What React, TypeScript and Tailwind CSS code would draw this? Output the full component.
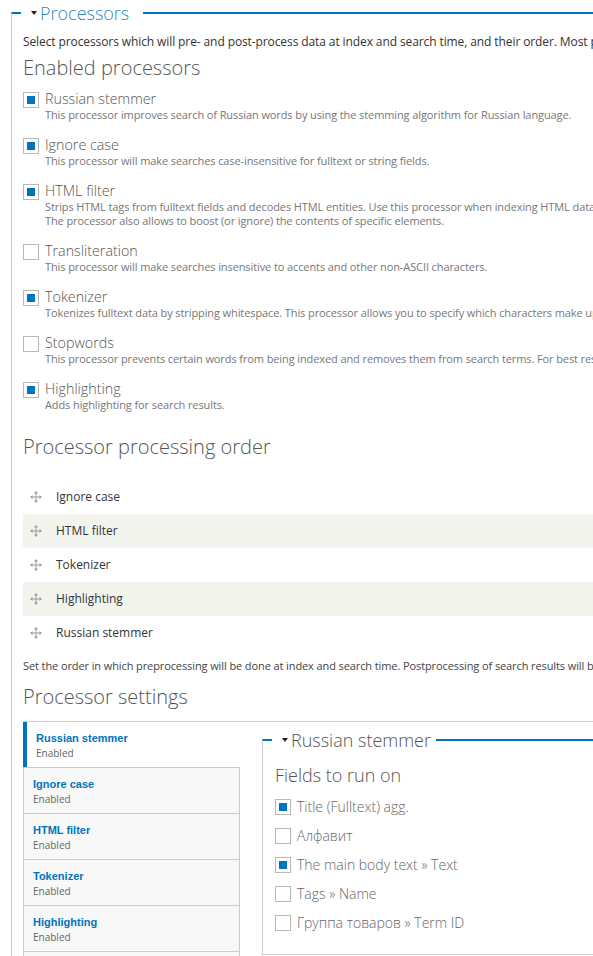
import React from 'react';

const processors = [
  { label: 'Russian stemmer', on: true, desc: ['This processor improves search of Russian words by using the stemming algorithm for Russian language.'] },
  { label: 'Ignore case', on: true, desc: ['This processor will make searches case-insensitive for fulltext or string fields.'] },
  {
    label: 'HTML filter',
    on: true,
    desc: [
      'Strips HTML tags from fulltext fields and decodes HTML entities. Use this processor when indexing HTML data, for example, node bodies for certain text formats.',
      'The processor also allows to boost (or ignore) the contents of specific elements.',
    ],
  },
  { label: 'Transliteration', on: false, desc: ['This processor will make searches insensitive to accents and other non-ASCII characters.'] },
  { label: 'Tokenizer', on: true, desc: ['Tokenizes fulltext data by stripping whitespace. This processor allows you to specify which characters make up words and which characters should be ignored.'] },
  { label: 'Stopwords', on: false, desc: ['This processor prevents certain words from being indexed and removes them from search terms. For best results, it should only be executed after tokenizing.'] },
  { label: 'Highlighting', on: true, desc: ['Adds highlighting for search results.'] },
];

const order = ['Ignore case', 'HTML filter', 'Tokenizer', 'Highlighting', 'Russian stemmer'];
const tabs = ['Ignore case', 'HTML filter', 'Tokenizer', 'Highlighting', 'Stopwords'];

const fields = [
  { label: 'Title (Fulltext) agg.', on: true },
  { label: 'Алфавит', on: false },
  { label: 'The main body text » Text', on: true },
  { label: 'Tags » Name', on: false },
  { label: 'Группа товаров » Term ID', on: false },
];

function Checkbox({ on }: { on: boolean }) {
  return (
    <span className="flex h-4 w-4 shrink-0 items-center justify-center border border-[#b8b8b8] bg-white">
      {on && <span className="h-2 w-2 bg-[#0074bd]" />}
    </span>
  );
}

function Caret() {
  return (
    <svg width="6" height="4" viewBox="0 0 6 4" className="shrink-0">
      <path d="M0 0 L6 0 L3 4 Z" fill="#222" />
    </svg>
  );
}

function DragHandle() {
  return (
    <svg width="12" height="12" viewBox="0 0 12 12" className="shrink-0">
      <g stroke="#9a9a9a" strokeWidth="1" fill="none">
        <path d="M6 1.5 V10.5 M1.5 6 H10.5" />
      </g>
      <g fill="#9a9a9a">
        <path d="M6 0 L8 2.5 H4 Z" />
        <path d="M6 12 L8 9.5 H4 Z" />
        <path d="M0 6 L2.5 4 V8 Z" />
        <path d="M12 6 L9.5 4 V8 Z" />
      </g>
    </svg>
  );
}

export default function App() {
  return (
    <div className="relative h-[956px] w-[593px] overflow-hidden bg-white font-['Open_Sans',sans-serif]">
      <div className="ml-[11px] w-[1100px]">
        {/* Processors legend */}
        <div className="flex h-[26px]">
          <div className="mt-[12px] w-[10px] border-l border-t-2 border-l-[#ccc] border-t-[#0074bd]" />
          <div className="ml-[10px] flex items-center gap-[3px]">
            <Caret />
            <span className="text-[18px] font-light leading-[26px] text-[#2a86c8]">Processors</span>
          </div>
          <div className="ml-[14px] mt-[12px] h-[2px] flex-1 bg-[#0074bd]" />
        </div>

        <div className="border-l border-[#ccc] pl-[11px] pt-[7px]">
          <p className="whitespace-nowrap text-[12px] leading-[18px] tracking-[-0.1px] text-[#333]">
            Select processors which will pre- and post-process data at index and search time, and their order. Most processors will only influence fulltext fields, but refer to their individual descriptions for details.
          </p>

          <h2 className="mt-[4px] text-[20px] font-light leading-[26px] text-[#555]">Enabled processors</h2>

          <div className="mt-[9px] flex flex-col gap-[14px]">
            {processors.map((p) => (
              <div key={p.label} className="flex gap-[6px]">
                <div className="mt-[2px]">
                  <Checkbox on={p.on} />
                </div>
                <div>
                  <div className="text-[14.3px] font-light leading-[18px] text-[#555]">{p.label}</div>
                  {p.desc.map((d) => (
                    <div key={d} className="whitespace-nowrap text-[11px] leading-[14px] tracking-[-0.1px] text-[#777]">
                      {d}
                    </div>
                  ))}
                </div>
              </div>
            ))}
          </div>

          <h2 className="mt-[22px] text-[20px] font-light leading-[26px] text-[#555]">Processor processing order</h2>

          <div className="mt-[20px]">
            {order.map((o, i) => (
              <div
                key={o}
                className={`flex h-[34px] items-center pl-[7px] ${i % 2 === 1 ? 'bg-[#f3f4ee]' : 'bg-white'}`}
              >
                <DragHandle />
                <span className="ml-[14px] text-[12px] text-[#333]">{o}</span>
              </div>
            ))}
          </div>

          <p className="mt-[9px] whitespace-nowrap text-[11px] leading-[14px] tracking-[-0.1px] text-[#444]">
            Set the order in which preprocessing will be done at index and search time. Postprocessing of search results will be in the exact opposite direction.
          </p>

          <h2 className="mt-[11px] text-[20px] font-light leading-[26px] text-[#555]">Processor settings</h2>

          {/* Vertical tabs */}
          <div className="mt-[11px] flex border-t border-[#ccc]">
            <div className="w-[217px] shrink-0">
              <div className="h-[45px] border-l-4 border-[#0074bd] bg-white pl-[9px] pt-[9px]">
                <div className="font-['Liberation_Sans',sans-serif] text-[11px] font-bold leading-[14px] text-[#0074bd]">
                  Russian stemmer
                </div>
                <div className="mt-[1px] text-[10px] leading-[14px] text-[#666]">Enabled</div>
              </div>
              {tabs.map((t) => (
                <div key={t} className="h-[46px] border-x border-t border-[#ccc] bg-[#f8f8f8] pl-[9px] pt-[9px]">
                  <div className="font-['Liberation_Sans',sans-serif] text-[11px] font-bold leading-[14px] text-[#0074bd]">
                    {t}
                  </div>
                  <div className="mt-[1px] text-[10px] leading-[14px] text-[#666]">Enabled</div>
                </div>
              ))}
            </div>

            <div className="flex-1 pl-[22px] pt-[5px]">
              <div className="flex h-[26px]">
                <div className="mt-[12px] w-[10px] border-l border-t-2 border-l-[#ccc] border-t-[#0074bd]" />
                <div className="ml-[10px] flex items-center gap-[3px]">
                  <Caret />
                  <span className="text-[18px] font-light leading-[26px] text-[#555]">Russian stemmer</span>
                </div>
                <div className="ml-[5px] mt-[12px] h-[2px] flex-1 bg-[#0074bd]" />
              </div>
              <div className="border-b border-l border-[#ccc] pb-[17px] pl-[12px] pt-[10px]">
                <h3 className="text-[18px] font-light leading-[24px] text-[#555]">Fields to run on</h3>
                <div className="mt-[5px]">
                  {fields.map((f) => (
                    <div key={f.label} className="flex h-[29px] items-center gap-[6px]">
                      <Checkbox on={f.on} />
                      <span className="whitespace-nowrap text-[14px] font-light text-[#666]">{f.label}</span>
                    </div>
                  ))}
                </div>
              </div>
            </div>
          </div>
        </div>
      </div>
    </div>
  );
}
